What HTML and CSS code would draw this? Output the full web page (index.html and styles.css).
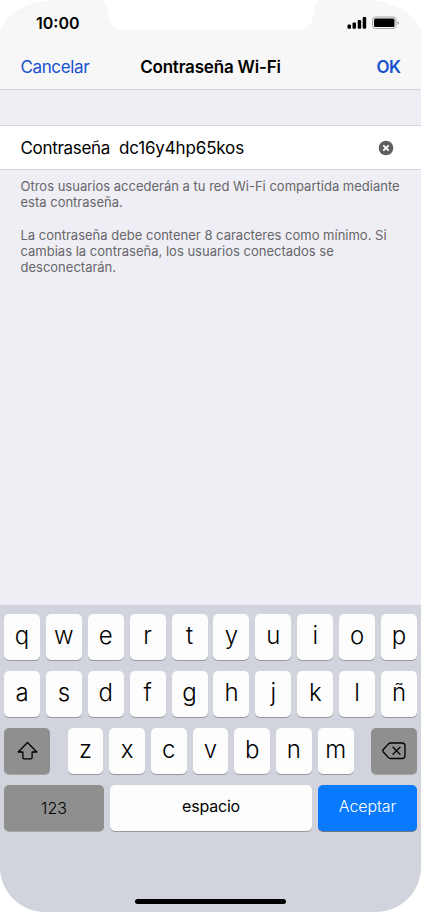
FILE: index.html
```html
<!DOCTYPE html>
<html lang="es">
<head>
<meta charset="utf-8">
<meta name="viewport" content="width=device-width">
<title>Contraseña Wi-Fi</title>
<link rel="stylesheet" href="styles.css">
</head>
<body>
<div class="phone">
  <svg class="notch" width="230" height="31" viewBox="0 0 230 31"><path d="M5 0C10 1 12 4 12.500 10C12.500 23 18 29.700 32 29.700H201C213 29.700 219 23 219 10C219.500 4 221 1 226 0Z" fill="#fff"/></svg>
  <header class="top">
    <div class="status">
      <span class="time">10:00</span>
      <span class="indicators">
        <svg width="54" height="14" viewBox="0 0 54 14">
          <rect x="0.500" y="8.500" width="3.500" height="4.200" rx="1"/>
          <rect x="5.500" y="6.500" width="3.500" height="6.200" rx="1"/>
          <rect x="10.700" y="4" width="3.500" height="8.700" rx="1"/>
          <rect x="15.700" y="1" width="3.500" height="11.700" rx="1"/>
          <rect x="25.500" y="1" width="23.500" height="11.500" rx="3" fill="none" stroke="#a5a5a5"/>
          <rect x="27" y="2.500" width="20.500" height="8.500" rx="1.500"/>
          <path d="M50.500 5v4q1.500-.5 1.500-2t-1.500-2" fill="#a5a5a5"/>
        </svg>
      </span>
    </div>
    <nav class="nav">
      <span class="cancel">Cancelar</span>
      <h1 class="title">Contraseña Wi-Fi</h1>
      <span class="ok">OK</span>
    </nav>
  </header>
  <main class="content">
    <div class="field">
      <span class="label">Contraseña</span>
      <span class="value">dc16y4hp65kos</span>
      <svg class="clear" width="16" height="16" viewBox="0 0 16 16"><circle cx="8" cy="8" r="7.300" fill="#5f5f62"/><path d="M5.300 5.300l5.400 5.400M10.700 5.300l-5.400 5.400" stroke="#fff" stroke-width="1.800"/></svg>
    </div>
    <div class="notes">
      <p>Otros usuarios accederán a tu red Wi-Fi compartida mediante<br>esta contraseña.</p>
      <p>La contraseña debe contener 8 caracteres como mínimo. Si<br>cambias la contraseña, los usuarios conectados se<br>desconectarán.</p>
    </div>
  </main>
  <section class="keyboard">
    <div class="row"><span class="key">q</span><span class="key">w</span><span class="key">e</span><span class="key">r</span><span class="key">t</span><span class="key">y</span><span class="key">u</span><span class="key">i</span><span class="key">o</span><span class="key">p</span></div>
    <div class="row"><span class="key">a</span><span class="key">s</span><span class="key">d</span><span class="key">f</span><span class="key">g</span><span class="key">h</span><span class="key">j</span><span class="key">k</span><span class="key">l</span><span class="key">ñ</span></div>
    <div class="row">
      <span class="key dark side"><svg width="22" height="20" viewBox="0 0 22 20"><path d="M11.500 1.500L20.800 11H16.100V16.500Q16.100 17.900 14.700 17.900H8.300Q6.900 17.900 6.900 16.500V11H2.200Z"/></svg></span>
      <span class="letters"><span class="key">z</span><span class="key">x</span><span class="key">c</span><span class="key">v</span><span class="key">b</span><span class="key">n</span><span class="key">m</span></span>
      <span class="key dark side"><svg width="24" height="18" viewBox="0 0 24 18"><path d="M8.500 1H20Q23 1 23 4V13.500Q23 16.500 20 16.500H8.500Q7.300 16.500 6.500 15.600L1.300 10Q.3 8.800 1.300 7.500L6.500 1.900Q7.300 1 8.500 1ZM11 5.200L18 12.300M18 5.200L11 12.300"/></svg></span>
    </div>
    <div class="row bottom"><span class="key dark numbers">123</span><span class="key space">espacio</span><span class="key accept">Aceptar</span></div>
    <div class="home"></div>
  </section>
</div>
</body>
</html>
```
FILE: styles.css
```css
* { box-sizing: border-box; }
body { margin: 0; background: #fff; font-family: Inter, "Liberation Sans", sans-serif; color: #000; }
.phone { position: relative; width: 421px; height: 912px; display: flex; flex-direction: column; overflow: hidden; border-radius: 60px 60px 45px 45px / 36px 36px 45px 45px; background: #efeef4; }
.notch { position: absolute; top: 0; left: 95px; }
.top { height: 90px; background: #f7f7f7; border-bottom: 1px solid #d5d5d8; }
.status { height: 46px; padding: 0 20px 0 36px; display: flex; justify-content: space-between; align-items: center; }
.time { font-size: 16px; font-weight: 600; }
.indicators { display: flex; }
.nav { height: 43px; padding: 0 20.500px; display: grid; grid-template-columns: 1fr auto 1fr; align-items: center; font-size: 17px; }
.nav > * { position: relative; top: -0.500px; }
.cancel { color: #1650ce; font-size: 17px; letter-spacing: -0.380px; }
.title { margin: 0; font-size: 17px; font-weight: 600; letter-spacing: -0.180px; }
.ok { color: #1650ce; font-size: 17px; font-weight: 600; text-align: right; letter-spacing: -0.500px; }
.content { height: 515px; padding-top: 35px; }
.field { height: 45px; display: flex; align-items: center; padding: 0 27.500px 0 20.500px; background: #fff; border: solid #d5d5d8; border-width: 1px 0; font-size: 17px; }
.label { letter-spacing: -0.320px; }
.value { margin-left: 9px; letter-spacing: -0.150px; }
.clear { margin-left: auto; }
.notes { padding: 8px 20px 0 20.500px; color: #66666b; font-size: 13px; line-height: 16.300px; white-space: nowrap; }
.notes p { margin: 0 0 16.300px; }
.keyboard { height: 307px; padding: 9px 4px 0; background: #d1d4dd; display: flex; flex-direction: column; gap: 11px; }
.row { display: flex; justify-content: space-between; gap: 5.900px; height: 46px; }
.key { flex: 1 1 0; display: flex; align-items: center; justify-content: center; padding-bottom: 4px; background: #fdfdfd; border-radius: 5px; box-shadow: 0 1px 0 #97999e; font-size: 24px; font-weight: 350; }
.letters { display: flex; gap: 5.900px; width: 286px; }
.dark { background: #8f8f8f; box-shadow: 0 1px 0 #a5a6aa; padding-bottom: 0; }
.side { flex: 0 0 46px; }
.side svg { fill: none; stroke: #000; stroke-width: 1.300; stroke-linejoin: round; stroke-linecap: round; }
.bottom .key { font-size: 16px; font-weight: 400; letter-spacing: -0.200px; }
.bottom .numbers { flex: 0 0 100px; font-weight: 350; letter-spacing: 0; }
.bottom .accept { flex: 0 0 99px; background: #087aff; color: #fff; font-weight: 350; letter-spacing: -0.100px; box-shadow: 0 1px 0 #6b7585; }
.home { width: 151px; height: 5px; border-radius: 3px; background: #000; margin: 57px auto 0; }
```
